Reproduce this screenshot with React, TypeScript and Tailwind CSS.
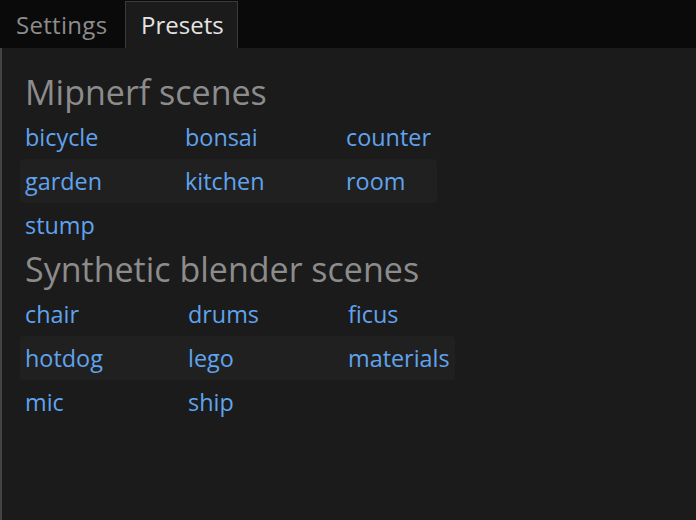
const mipnerf = [
  ['bicycle', 'bonsai', 'counter'],
  ['garden', 'kitchen', 'room'],
  ['stump'],
];

const synthetic = [
  ['chair', 'drums', 'ficus'],
  ['hotdog', 'lego', 'materials'],
  ['mic', 'ship'],
];

function SceneGrid({ rows, cols, width }: { rows: string[][]; cols: string; width: string }) {
  return (
    <div className={`ml-[18px] flex flex-col ${width}`}>
      {rows.map((row, i) => (
        <div
          key={i}
          className={`grid h-[44px] items-center rounded-[4px] px-[5px] ${cols} ${i % 2 === 1 ? 'bg-[#202020]' : ''}`}
        >
          {row.map((name) => (
            <a key={name} href="#" className="text-[23.4px] leading-[44px] text-[#60a3ee]">
              {name}
            </a>
          ))}
        </div>
      ))}
    </div>
  );
}

export default function App() {
  return (
    <div
      className="flex h-[520px] w-[696px] flex-col overflow-hidden bg-[#1b1b1b]"
      style={{ fontFamily: '"Open Sans", "Noto Sans", sans-serif' }}
    >
      <div className="flex h-[48px] shrink-0 items-end gap-[2px] bg-[#0a0a0a]">
        <button className="flex h-[47px] w-[123px] items-center px-[16px] text-[24px] tracking-[0.3px] text-[#8c8c8c]">
          Settings
        </button>
        <button className="flex h-[47px] w-[113px] items-center border border-b-0 border-[#3a3a3a] bg-[#1b1b1b] px-[15px] text-[24px] text-[#e4e4e4]">
          Presets
        </button>
      </div>
      <div className="flex-1 border-l-2 border-[#444444] pt-[22px]">
        <h2 className="ml-[23px] h-[45px] text-[34px] font-normal leading-[45px] text-[#8c8c8c]">
          Mipnerf scenes
        </h2>
        <SceneGrid rows={mipnerf} cols="grid-cols-[160px_161px_1fr]" width="w-[417px]" />
        <h2 className="ml-[23px] h-[45px] text-[34px] font-normal leading-[45px] text-[#8c8c8c]">
          Synthetic blender scenes
        </h2>
        <SceneGrid rows={synthetic} cols="grid-cols-[163px_160px_1fr]" width="w-[435px]" />
      </div>
    </div>
  );
}
